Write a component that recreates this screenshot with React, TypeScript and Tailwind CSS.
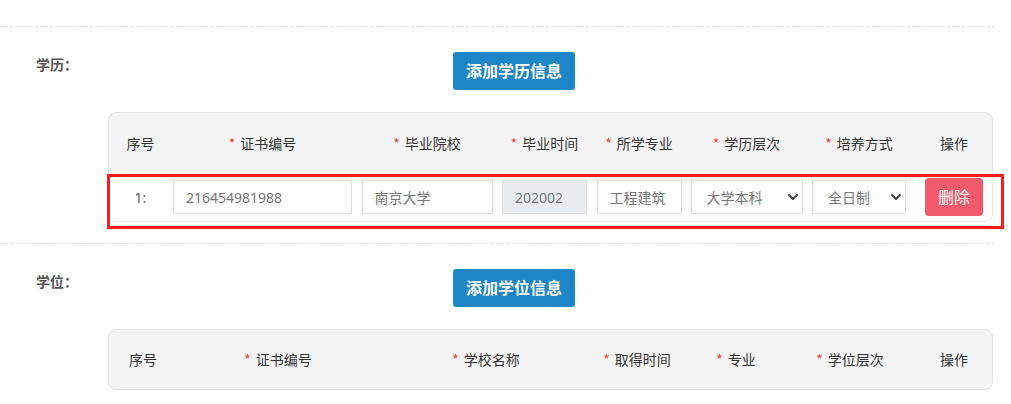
import { ReactNode } from "react";

const eduCols = "grid grid-cols-[55px_189px_140px_95px_94px_121px_104px_86px] pl-[4px] items-center";
const degreeCols = "grid grid-cols-[60px_210px_206px_96px_102px_126px_82px] pl-[4px] items-center";

function Th({ label, required }: { label: string; required?: boolean }) {
  return (
    <div className="flex items-center justify-center text-[14px] text-[#333] whitespace-nowrap">
      {required && <span className="text-[#f43b3b] mr-[5px] font-['Noto_Sans_CJK_SC',sans-serif]">*</span>}
      {label}
    </div>
  );
}

function Input({ value, width, disabled }: { value: string; width: string; disabled?: boolean }) {
  return (
    <div className="flex justify-center">
      <input
        readOnly
        value={value}
        className={`${width} h-[34px] border border-[#e0e0e0] pl-[12px] text-[14px] text-[#777] outline-none ${
          disabled ? "bg-[#e9ecef]" : "bg-white"
        }`}
      />
    </div>
  );
}

function Select({ value, width }: { value: string; width: string }) {
  return (
    <div className="flex justify-center">
      <div className={`relative ${width} h-[34px]`}>
        <select
          defaultValue={value}
          className="w-full h-full appearance-none border border-[#e0e0e0] bg-white pl-[15px] text-[14px] text-[#777] outline-none"
        >
          <option>{value}</option>
        </select>
        <svg
          viewBox="0 0 10 6"
          className="absolute right-[5px] top-[14px] w-[10px] h-[6px] pointer-events-none"
          fill="none"
          stroke="#444"
          strokeWidth="2"
          strokeLinecap="round"
          strokeLinejoin="round"
        >
          <path d="M1 1l4 4 4-4" />
        </svg>
      </div>
    </div>
  );
}

function Section({ label, button, children, last }: { label: string; button: string; children: ReactNode; last?: boolean }) {
  return (
    <div className={`flex pt-[25px] ${last ? "" : "pb-[21px]"}`}>
      <div className="w-[108px] pl-[36px] pt-[4px] text-[14px] leading-[18px] font-bold text-[#555]">{label}</div>
      <div className="w-[885px]">
        <button className="ml-[345px] h-[38px] w-[122px] rounded-[3px] bg-[#1e86c6] text-white text-[16px] font-bold">
          {button}
        </button>
        <div className="mt-[22px]">{children}</div>
      </div>
    </div>
  );
}

export default function App() {
  return (
    <div className="w-[1011px] h-[404px] bg-white overflow-hidden font-['Microsoft_YaHei','Noto_Sans','Noto_Sans_CJK_SC',sans-serif]">
      <div className="h-[26px]" />
      <div className="w-[995px] border-t border-dashed border-[#e2e2e2]" />

      <Section label="学历：" button="添加学历信息">
        <div className="relative">
          <div className="w-[885px] rounded-[8px] border border-[#e6e6e6] bg-[#f4f4f4] overflow-hidden">
            <div className={`${eduCols} h-[60px]`}>
              <Th label="序号" />
              <Th label="证书编号" required />
              <Th label="毕业院校" required />
              <Th label="毕业时间" required />
              <Th label="所学专业" required />
              <Th label="学历层次" required />
              <Th label="培养方式" required />
              <Th label="操作" />
            </div>
            <div className={`${eduCols} h-[48px] bg-white`}>
              <div className="text-center text-[14px] text-[#666]">1:</div>
              <Input value="216454981988" width="w-[179px]" />
              <Input value="南京大学" width="w-[131px]" />
              <Input value="202002" width="w-[85px]" disabled />
              <Input value="工程建筑" width="w-[85px]" />
              <Select value="大学本科" width="w-[112px]" />
              <Select value="全日制" width="w-[94px]" />
              <div className="flex justify-center">
                <button className="h-[38px] w-[58px] rounded-[4px] bg-[#f05a6b] text-white text-[16px]">删除</button>
              </div>
            </div>
          </div>
          <div className="absolute left-[-1px] top-[62px] w-[897px] h-[55px] border-[3px] border-[#ff1a1a] pointer-events-none" />
        </div>
      </Section>

      <div className="w-[995px] border-t border-dashed border-[#e2e2e2]" />

      <Section label="学位：" button="添加学位信息" last>
        <div className="w-[885px] rounded-[8px] border border-[#e6e6e6] bg-[#f4f4f4] overflow-hidden">
          <div className={`${degreeCols} h-[59px]`}>
            <Th label="序号" />
            <Th label="证书编号" required />
            <Th label="学校名称" required />
            <Th label="取得时间" required />
            <Th label="专业" required />
            <Th label="学位层次" required />
            <Th label="操作" />
          </div>
        </div>
      </Section>
    </div>
  );
}
